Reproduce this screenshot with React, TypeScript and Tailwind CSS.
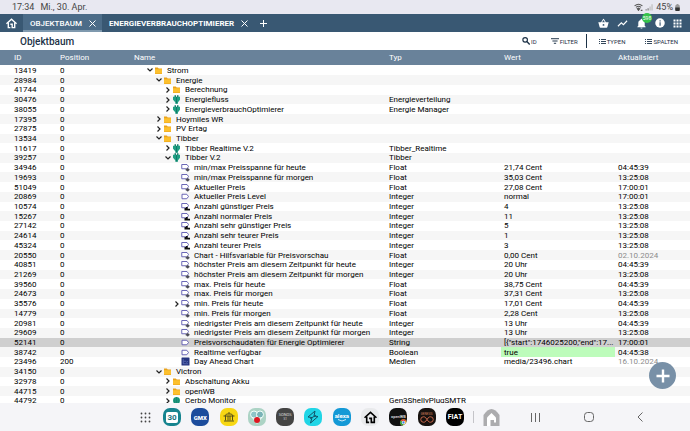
import type { ReactNode } from 'react'
import clsx from 'clsx'

type IconKind = 'folder' | 'plug' | 'globe' | 'pencil' | 'bars' | 'tag' | 'chart'

type Row = {
  id: number
  pos?: number
  depth: number
  open?: boolean
  icon: IconKind
  name: string
  typ?: string
  value?: string
  updated?: string
  old?: boolean
  selected?: boolean
  active?: boolean
}

const rows: Row[] = [
  { id: 13419, depth: 0, open: true, icon: 'folder', name: 'Strom' },
  { id: 28984, depth: 1, open: true, icon: 'folder', name: 'Energie' },
  { id: 41744, depth: 2, open: false, icon: 'folder', name: 'Berechnung' },
  { id: 30476, depth: 2, open: false, icon: 'plug', name: 'Energiefluss', typ: 'Energieverteilung' },
  { id: 38055, depth: 2, open: false, icon: 'plug', name: 'EnergieverbrauchOptimierer', typ: 'Energie Manager' },
  { id: 17395, depth: 1, open: false, icon: 'folder', name: 'Hoymiles WR' },
  { id: 27875, depth: 1, open: false, icon: 'folder', name: 'PV Ertag' },
  { id: 13534, depth: 1, open: true, icon: 'folder', name: 'Tibber' },
  { id: 11617, depth: 2, open: false, icon: 'plug', name: 'Tibber Realtime V.2', typ: 'Tibber_Realtime' },
  { id: 39257, depth: 2, open: true, icon: 'plug', name: 'Tibber V.2', typ: 'Tibber' },
  { id: 34946, depth: 3, icon: 'pencil', name: 'min/max Preisspanne für heute', typ: 'Float', value: '21,74 Cent', updated: '04:45:39' },
  { id: 19693, depth: 3, icon: 'pencil', name: 'min/max Preisspanne für morgen', typ: 'Float', value: '35,03 Cent', updated: '13:25:08' },
  { id: 51049, depth: 3, icon: 'pencil', name: 'Aktueller Preis', typ: 'Float', value: '27,08 Cent', updated: '17:00:01' },
  { id: 20869, depth: 3, icon: 'tag', name: 'Aktueller Preis Level', typ: 'Integer', value: 'normal', updated: '17:00:01' },
  { id: 10574, depth: 3, icon: 'bars', name: 'Anzahl günstiger Preis', typ: 'Integer', value: '4', updated: '13:25:08' },
  { id: 15267, depth: 3, icon: 'bars', name: 'Anzahl normaler Preis', typ: 'Integer', value: '11', updated: '13:25:08' },
  { id: 27142, depth: 3, icon: 'bars', name: 'Anzahl sehr günstiger Preis', typ: 'Integer', value: '5', updated: '13:25:08' },
  { id: 24614, depth: 3, icon: 'bars', name: 'Anzahl sehr teurer Preis', typ: 'Integer', value: '1', updated: '13:25:08' },
  { id: 45324, depth: 3, icon: 'bars', name: 'Anzahl teurer Preis', typ: 'Integer', value: '3', updated: '13:25:08' },
  { id: 20550, depth: 3, icon: 'pencil', name: 'Chart - Hilfsvariable für Preisvorschau', typ: 'Float', value: '0,00 Cent', updated: '02.10.2024', old: true },
  { id: 40851, depth: 3, icon: 'pencil', name: 'höchster Preis am diesem Zeitpunkt für heute', typ: 'Integer', value: '20 Uhr', updated: '04:45:39' },
  { id: 21269, depth: 3, icon: 'pencil', name: 'höchster Preis am diesem Zeitpunkt für morgen', typ: 'Integer', value: '20 Uhr', updated: '13:25:08' },
  { id: 39560, depth: 3, icon: 'pencil', name: 'max. Preis für heute', typ: 'Float', value: '38,75 Cent', updated: '04:45:39' },
  { id: 24673, depth: 3, icon: 'pencil', name: 'max. Preis für morgen', typ: 'Float', value: '37,31 Cent', updated: '13:25:08' },
  { id: 35576, depth: 3, open: false, icon: 'pencil', name: 'min. Preis für heute', typ: 'Float', value: '17,01 Cent', updated: '04:45:39' },
  { id: 14779, depth: 3, icon: 'pencil', name: 'min. Preis für morgen', typ: 'Float', value: '2,28 Cent', updated: '13:25:08' },
  { id: 20981, depth: 3, icon: 'pencil', name: 'niedrigster Preis am diesem Zeitpunkt für heute', typ: 'Integer', value: '13 Uhr', updated: '04:45:39' },
  { id: 29609, depth: 3, icon: 'pencil', name: 'niedrigster Preis am diesem Zeitpunkt für morgen', typ: 'Integer', value: '13 Uhr', updated: '13:25:08' },
  { id: 52141, depth: 3, icon: 'tag', name: 'Preisvorschaudaten für Energie Optimierer', typ: 'String', value: '[{"start":1746025200,"end":17...', updated: '17:00:01', selected: true },
  { id: 38742, depth: 3, icon: 'tag', name: 'Realtime verfügbar', typ: 'Boolean', value: 'true', updated: '04:45:38', active: true },
  { id: 23496, pos: 200, depth: 3, icon: 'chart', name: 'Day Ahead Chart', typ: 'Medien', value: 'media/23496.chart', updated: '16.10.2024', old: true },
  { id: 34150, depth: 1, open: true, icon: 'folder', name: 'Victron' },
  { id: 32978, depth: 2, open: false, icon: 'folder', name: 'Abschaltung Akku' },
  { id: 44715, depth: 2, open: false, icon: 'folder', name: 'openWB' },
  { id: 44792, depth: 2, open: false, icon: 'globe', name: 'Cerbo Monitor', typ: 'Gen3ShellyPlugSMTR' },
]

const indent = ['pl-3', 'pl-[21px]', 'pl-[30px]', 'pl-[39px]']

export default function App() {
  return (
    <div className="flex h-screen flex-col overflow-hidden bg-white font-['Roboto',sans-serif] text-[8px] leading-[9px] text-black">
      <StatusBar />
      <NavBar />
      <TitleBar />
      <main className="relative min-h-0 flex-1">
        <ObjectTable />
        <button
          aria-label="Objekt hinzufügen"
          className="absolute right-[14px] bottom-[17px] flex size-[27px] items-center justify-center rounded-full bg-[#7890a7] text-white"
        >
          <svg className="size-[14px]" viewBox="0 0 14 14" stroke="currentColor" strokeWidth="2.4">
            <path d="M7 0.5v13M0.5 7h13" />
          </svg>
        </button>
      </main>
      <Dock />
    </div>
  )
}

function StatusBar() {
  return (
    <header className="flex h-[14px] shrink-0 items-center bg-[#e8e8f1] pr-[10px] pl-3 text-[9px] text-[#444]">
      <span>17:34</span>
      <span className="ml-[6px]">Mi., 30. Apr.</span>
      <div className="ml-auto flex items-center gap-[2px]">
        <svg className="h-2 w-[9px]" viewBox="0 0 16 14" fill="none" stroke="#555" strokeWidth="1.8">
          <path d="M1 5q7-6 14 0M3.500 7.500q4.500-4 9 0M6 10q2-2 4 0" />
          <path d="M8 13l-2-3h4zM12 13h3" fill="#555" />
        </svg>
        <svg className="h-2 w-[9px]" viewBox="0 0 16 14">
          <path d="M1 13h2v-2H1zM4.500 13h2V9h-2z" fill="#777" />
          <path d="M8 13h2V6H8zM11.500 13h2V2h-2z" fill="#bbb" />
        </svg>
        <span>45%</span>
        <svg className="h-[7px] w-[5px]" viewBox="0 0 10 14">
          <rect x="3" width="4" height="3" fill="#999" />
          <rect x="0.500" y="2" width="9" height="12" rx="2" fill="#999" />
          <path d="M.5 7h9v5a2 2 0 0 1-2 2h-5a2 2 0 0 1-2-2z" fill="#333" />
        </svg>
      </div>
    </header>
  )
}

function NavBar() {
  return (
    <nav className="flex h-[18px] shrink-0 items-stretch bg-[#395873] pr-2 font-medium text-white">
      <button aria-label="Start" className="flex w-[23px] items-center justify-center">
        <HouseIcon className="size-[11px]" />
      </button>
      <div className="flex items-center gap-[7px] border-b-2 border-[#7f99ae] bg-[#4c6c88] pt-[2px] pr-[6px] pl-[7px]">
        <button>OBJEKTBAUM</button>
        <button aria-label="Objektbaum schließen"><CloseIcon /></button>
      </div>
      <div className="flex items-center gap-[7px] pl-[7px] font-bold">
        <button>ENERGIEVERBRAUCHOPTIMIERER</button>
        <button aria-label="Energieverbrauchoptimierer schließen"><CloseIcon /></button>
      </div>
      <button aria-label="Neuer Tab" className="ml-3">
        <svg className="size-[7px]" viewBox="0 0 7 7" stroke="currentColor">
          <path d="M3.500 0v7M0 3.500h7" />
        </svg>
      </button>
      <div className="ml-auto flex items-center gap-2">
        <button aria-label="Store">
          <svg className="size-[11px]" viewBox="0 0 24 24" fill="currentColor">
            <path fillRule="evenodd" d="M17.200 9L12.800 2.400a1 1 0 0 0-1.600 0L6.800 9H2a1 1 0 0 0-1 1.300l2.500 9.200A2 2 0 0 0 5.500 21h13a2 2 0 0 0 2-1.500L23 10.300A1 1 0 0 0 22 9zM9 9l3-4.400L15 9zm3 8a2 2 0 1 1 0-4 2 2 0 0 1 0 4z" />
          </svg>
        </button>
        <button aria-label="Verlauf">
          <svg className="size-[11px]" viewBox="0 0 24 24" fill="none" stroke="currentColor" strokeWidth="2.400">
            <path d="M2 18l7.500-7.500 4.500 4L22 6" />
          </svg>
        </button>
        <button aria-label="Meldungen" className="relative">
          <svg className="size-[11px]" viewBox="0 0 24 24" fill="currentColor">
            <path d="M12 23a2.200 2.200 0 0 0 2.200-2H9.800A2.200 2.200 0 0 0 12 23zm7-6v-6c0-3.500-1.800-6-5-6.800V3.500a2 2 0 0 0-4 0v.7C6.800 5 5 7.500 5 11v6l-2 2v1h18v-1z" />
          </svg>
          <span className="absolute -top-[5px] left-[6px] size-[10px] rounded-full bg-[#35c24a] text-center text-[5px] leading-[10px] font-normal">598</span>
        </button>
        <button aria-label="Info">
          <svg className="size-[10px]" viewBox="0 0 20 20">
            <circle cx="10" cy="10" r="9.500" fill="currentColor" />
            <path d="M9 4.500h2.300v2.300H9zM9 8.500h2.300v7H9z" fill="#395873" />
          </svg>
        </button>
        <button aria-label="Menü">
          <svg className="size-[9px]" viewBox="0 0 9 9" fill="currentColor">
            <path d="M0.500 0.500h2v2h-2zM3.500 0.500h2v2h-2zM6.500 0.500h2v2h-2zM0.500 3.500h2v2h-2zM3.500 3.500h2v2h-2zM6.500 3.500h2v2h-2zM0.500 6.500h2v2h-2zM3.500 6.500h2v2h-2zM6.500 6.500h2v2h-2z" />
          </svg>
        </button>
      </div>
    </nav>
  )
}

function TitleBar() {
  return (
    <div className="flex h-[18px] shrink-0 items-center pr-3 pl-5 text-[#1d3247]">
      <h1 className="text-[10px] font-medium">Objektbaum</h1>
      <div className="ml-auto flex items-center text-[6px]">
        <ToolButton label="ID">
          <svg className="size-2" viewBox="0 0 14 14" fill="none" stroke="currentColor" strokeWidth="2">
            <circle cx="5.500" cy="5" r="4" />
            <path d="M8.500 8l5 5" strokeWidth="2.500" />
          </svg>
        </ToolButton>
        <div className="ml-[14px]">
          <ToolButton label="FILTER">
            <svg className="size-2" viewBox="0 0 14 14" stroke="currentColor" strokeWidth="1.700">
              <path d="M0 3h14M2.500 7h9M5 11h4" />
            </svg>
          </ToolButton>
        </div>
        <div className="mr-3 ml-2 h-[14px] w-px bg-[#1d3247]" />
        <ToolButton label="TYPEN"><ListIcon /></ToolButton>
        <div className="ml-5">
          <ToolButton label="SPALTEN"><ListIcon /></ToolButton>
        </div>
      </div>
    </div>
  )
}

function ToolButton({ label, children }: { label: string; children: ReactNode }) {
  return (
    <button className="flex items-center gap-px">
      {children}
      <span className="pt-px">{label}</span>
    </button>
  )
}

function ObjectTable() {
  return (
    <table className="h-full w-full table-fixed border-collapse whitespace-nowrap">
      <colgroup>
        <col className="w-[57px]" />
        <col className="w-[74px]" />
        <col />
        <col className="w-[115px]" />
        <col className="w-[114px]" />
        <col className="w-[75px]" />
      </colgroup>
      <thead>
        <tr className="h-[15px] border-b border-white bg-[#69829a] text-left text-white [&>th]:p-0 [&>th]:pl-[3px] [&>th]:font-normal">
          <th><span className="pl-[11px]">ID</span></th>
          <th>Position</th>
          <th>Name</th>
          <th>Typ</th>
          <th>Wert</th>
          <th>Aktualisiert</th>
        </tr>
      </thead>
      <tbody>
        {rows.map(row => (
          <tr
            key={row.id}
            className={clsx(
              '[&>td]:p-0 [&>td]:pl-[3px]',
              row.selected ? 'bg-[#cfcfcf]' : 'even:bg-[#f6f6f6]'
            )}
          >
            <td><span className="pl-[11px]">{row.id}</span></td>
            <td>{row.pos ?? 0}</td>
            <td>
              <div className={clsx('flex items-center', indent[row.depth])}>
                <span className="mr-px flex w-[7px] justify-center">
                  {row.open !== undefined && <Chevron open={row.open} />}
                </span>
                <NodeIcon kind={row.icon} />
                <span className="ml-1">{row.name}</span>
              </div>
            </td>
            <td>{row.typ}</td>
            <td className={clsx(row.active && 'bg-[#bdfcbb]')}>{row.value}</td>
            <td className={clsx(row.old && 'text-[#8c8c8c]')}>{row.updated}</td>
          </tr>
        ))}
      </tbody>
    </table>
  )
}

function Chevron({ open }: { open: boolean }) {
  return (
    <button aria-label={open ? 'Zuklappen' : 'Aufklappen'}>
      <svg className="size-[6px]" viewBox="0 0 6 6" fill="none" stroke="#222" strokeWidth="1.200">
        <path d={open ? 'M0.500 1.500L3 4l2.500-2.500' : 'M1.500 0.500L4 3 1.500 5.500'} />
      </svg>
    </button>
  )
}

function NodeIcon({ kind }: { kind: IconKind }) {
  return (
    <svg className="h-[9px] w-[9px] shrink-0" viewBox="0 0 18 18">
      {kind === 'folder' && (
        <>
          <path d="M2 3h5.500l2 2H16v11H2z" fill="#e9a21b" />
          <path d="M2 6.500h14V15H2z" fill="#fcc02e" />
        </>
      )}
      {kind === 'plug' && (
        <>
          <path d="M5 0.500h3V4H5zM10 0.500h3V4h-3z" fill="#167a68" />
          <path d="M2 3.500h14V9.500L12 14.500v3H6.500v-3L2 9.500z" fill="#1f9f82" />
          <path d="M9 4v13" stroke="#0f6d62" strokeWidth="1.500" />
        </>
      )}
      {kind === 'globe' && (
        <>
          <circle cx="9" cy="9" r="7" fill="#1f9f82" />
          <path d="M9 2v14M5.500 4v10M12.500 4v10" stroke="#0f6d62" fill="none" />
        </>
      )}
      {(kind === 'tag' || kind === 'pencil' || kind === 'bars') && (
        <path
          d={kind === 'tag' ? 'M2 4.500h9.500L15 9l-3.500 4.500H2z' : 'M1.500 3H12l3 4-3 4.500H1.500z'}
          fill="#fff"
          stroke="#5b57ae"
          strokeWidth="1.800"
        />
      )}
      {kind === 'pencil' && (
        <path d="M8 13.500l5.500-4 4.500 4-4.500 4zM5 15.500h3.500" fill="#4a4a55" stroke="#fff" strokeWidth="0.500" />
      )}
      {kind === 'bars' && <path d="M7 17V12h3v-2h3.500v3.500H18V17z" fill="#111" />}
      {kind === 'chart' && (
        <>
          <rect x="1" y="1" width="16" height="16" rx="1" fill="#26357f" />
          <path d="M4.500 4v9.500H14M5 10.500l3-3 3 3 3-2" fill="none" stroke="#8395dd" />
        </>
      )}
    </svg>
  )
}

function CloseIcon() {
  return (
    <svg className="size-[7px]" viewBox="0 0 7 7" stroke="currentColor">
      <path d="M0.500 0.500l6 6M6.500 0.500l-6 6" />
    </svg>
  )
}

function ListIcon() {
  return (
    <svg className="size-[7px]" viewBox="0 0 14 14" stroke="currentColor" strokeWidth="1.800">
      <path d="M0 3h2M0 7h2M0 11h2M4 3h10M4 7h10M4 11h10" />
    </svg>
  )
}

function HouseIcon({ className }: { className?: string }) {
  return (
    <svg className={className} viewBox="0 0 24 24" fill="none" stroke="currentColor" strokeWidth="3">
      <path d="M1 12.500L12 2.500l11 10" />
      <path d="M5 10v11h4.500M19 10v11h-5.500v-7.500H9.500" />
    </svg>
  )
}

function DockApp({ label, className, children }: { label: string; className: string; children: ReactNode }) {
  return (
    <button
      aria-label={label}
      className={clsx('flex size-[18px] shrink-0 flex-col items-center justify-center overflow-hidden rounded-[7px]', className)}
    >
      {children}
    </button>
  )
}

function Dock() {
  return (
    <footer className="relative -mt-[3px] flex h-7 shrink-0 items-center bg-[#f5f5f8] pl-[140px]">
      <button aria-label="Alle Apps" className="mr-3">
        <svg className="size-[11px]" viewBox="0 0 11 11" fill="#444">
          {[1.5, 5.5, 9.5].map(y => [1.5, 5.5, 9.5].map(x => <circle key={`${x}-${y}`} cx={x} cy={y} r="0.900" />))}
        </svg>
      </button>
      <div className="flex w-[301px] shrink-0 justify-between">
        <DockApp label="Kalender" className="bg-[#16848f]">
          <span className="rounded-[2px] bg-white px-px text-[8px] leading-[11px] font-bold text-[#16727d]">30</span>
        </DockApp>
        <DockApp label="GMX" className="bg-[#1c4c9c] text-[6px] font-black text-white">GMX</DockApp>
        <DockApp label="Museum" className="bg-[#f7d713]">
          <svg className="size-3" viewBox="0 0 24 24" fill="none" stroke="#57501a" strokeWidth="2">
            <path d="M1 10h22M4 10l3-4h10l3 4M12 6V2M5 10v9M10 10v9M14 10v9M19 10v9M2 20h20" />
          </svg>
        </DockApp>
        <DockApp label="Kamera" className="bg-[#acd3c5]">
          <svg className="size-[18px]" viewBox="0 0 36 36">
            <circle cx="12" cy="13" r="7" fill="#8ec5c8" stroke="#f3fffb" strokeWidth="2" />
            <circle cx="24" cy="13" r="7" fill="#79b3b7" stroke="#f3fffb" strokeWidth="2" />
            <path d="M8 20h20l-10 12z" fill="#e2f2ec" />
            <circle cx="18" cy="24" r="6" fill="#dd1620" />
          </svg>
        </DockApp>
        <DockApp label="Sonos" className="bg-[#444] text-[4px] leading-[4px] text-[#ddd]">
          <span>SONOS</span>
          <span className="text-[3px]">S1</span>
        </DockApp>
        <DockApp label="Tibber" className="bg-[#20d5e6]">
          <svg className="size-[14px]" viewBox="0 0 28 28" fill="none" stroke="#125267" strokeWidth="2">
            <path d="M18 2L4 14l8 1-3 11 15-13-8-1z" />
            <path d="M8 17l12-6" />
          </svg>
        </DockApp>
        <DockApp label="Alexa" className="bg-[#1499d6] text-[6px] leading-[6px] font-bold text-white">
          <span>alexa</span>
          <svg className="h-[3px] w-[10px]" viewBox="0 0 20 6" fill="none" stroke="currentColor" strokeWidth="1.600">
            <path d="M2 1q8 6 16 0" />
          </svg>
        </DockApp>
        <DockApp label="Symcon" className="bg-[#e9eaec] text-black">
          <HouseIcon className="size-[13px]" />
        </DockApp>
        <DockApp label="OpenWB" className="relative bg-[#111] text-[4px] leading-[6px] font-bold text-[#ccc]">
          <span>openWB</span>
          <svg className="absolute right-0 bottom-0 size-[7px]" viewBox="0 0 14 14">
            <circle cx="7" cy="7" r="6.500" fill="#f2c230" />
            <path d="M7 7L1.400 3.700A6.500 6.500 0 0 1 12.600 3.700z" fill="#df4438" />
            <path d="M7 7L1.400 3.700A6.500 6.500 0 0 0 6.500 13.500z" fill="#2ba24c" />
            <circle cx="7" cy="7" r="3.400" fill="#fff" />
            <circle cx="7" cy="7" r="2.300" fill="#3e7de8" />
          </svg>
        </DockApp>
        <DockApp label="Genesis" className="bg-[#17120f] text-[3px] leading-[4px] text-[#d88260]">
          <span>GENESIS</span>
          <svg className="h-[7px] w-[14px]" viewBox="0 0 28 14" fill="none" stroke="#c4664b" strokeWidth="2">
            <path d="M14 7C11 2 9 1.500 7 1.500a5.500 5.500 0 0 0 0 11c2 0 4-.5 7-5.500s5-5.500 7-5.500a5.500 5.500 0 0 1 0 11c-2 0-4-.5-7-5.500z" />
          </svg>
        </DockApp>
        <DockApp label="Fiat" className="bg-black text-[7px] font-bold text-white">FIAT</DockApp>
      </div>
      <div className="ml-[9px] h-3 w-px shrink-0 bg-[#c4c4c8]" />
      <button aria-label="Symcon Haus" className="ml-2">
        <svg className="size-[19px]" viewBox="0 0 38 38">
          <path d="M3 36V14Q19-10 35 14v22z" fill="#acacae" />
          <path d="M10 36V19l9-9 9 9v17z" fill="#fff" />
          <path d="M17 36v-12h7v5h4v7z" fill="#acacae" />
        </svg>
      </button>
      <div className="ml-[30px] flex flex-1 items-center justify-between pr-[47px] text-[#666]">
        <button aria-label="Letzte Apps">
          <svg className="size-[9px]" viewBox="0 0 9 9" stroke="currentColor">
            <path d="M0.500 0v9M4.500 0v9M8.500 0v9" />
          </svg>
        </button>
        <button aria-label="Home">
          <svg className="size-[10px]" viewBox="0 0 10 10" fill="none" stroke="currentColor">
            <rect x="0.500" y="0.500" width="9" height="9" rx="3" />
          </svg>
        </button>
        <button aria-label="Zurück">
          <svg className="h-[10px] w-[6px]" viewBox="0 0 6 10" fill="none" stroke="currentColor">
            <path d="M5.500 0.500L1 5l4.500 4.500" />
          </svg>
        </button>
      </div>
    </footer>
  )
}
